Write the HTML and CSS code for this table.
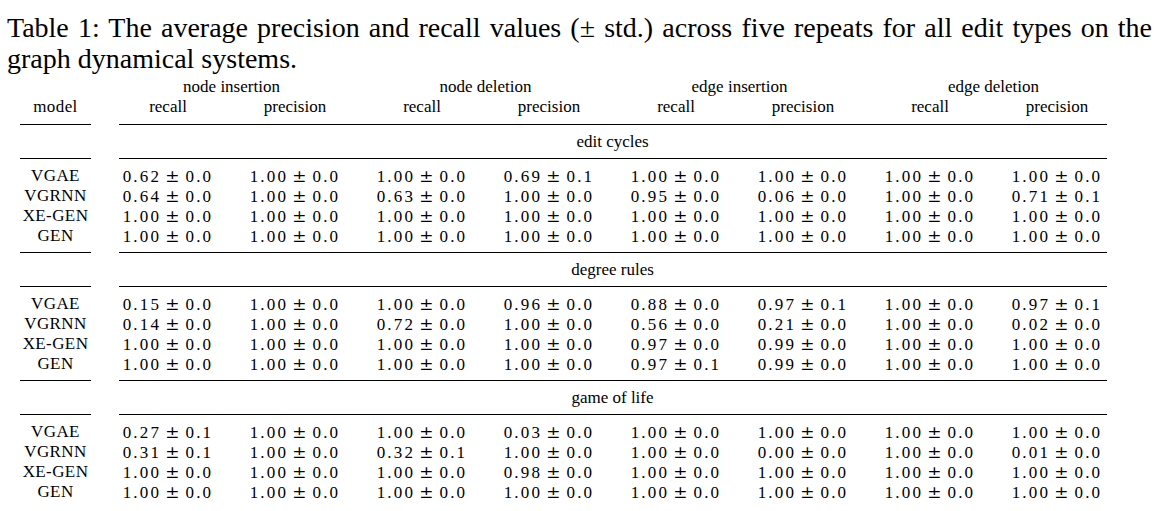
FILE: index.html
```html
<!DOCTYPE html>
<html>
<head>
<meta charset="utf-8">
<link rel="stylesheet" href="styles.css">
</head>
<body>
<p class="caption">Table 1: The average precision and recall values (± std.) across five repeats for all edit types on the graph dynamical systems.</p>
<div class="table">
  <div class="row head">
    <div></div>
    <div class="group">node insertion</div>
    <div class="group">node deletion</div>
    <div class="group">edge insertion</div>
    <div class="group">edge deletion</div>
  </div>
  <div class="row head head2">
    <div class="model">model</div>
    <div class="sub">recall</div><div class="sub">precision</div>
    <div class="sub">recall</div><div class="sub">precision</div>
    <div class="sub">recall</div><div class="sub">precision</div>
    <div class="sub">recall</div><div class="sub">precision</div>
  </div>
  <div class="row rule"><div class="rm"></div><div class="rx"></div></div>

  <div class="row title"><div></div><div class="tt">edit cycles</div></div>
  <div class="row rule"><div class="rm"></div><div class="rx"></div></div>
  <div class="block">
    <div class="row data"><div class="model">VGAE</div><span class="v">0.62<i>±</i>0.0</span><span class="v">1.00<i>±</i>0.0</span><span class="v">1.00<i>±</i>0.0</span><span class="v">0.69<i>±</i>0.1</span><span class="v">1.00<i>±</i>0.0</span><span class="v">1.00<i>±</i>0.0</span><span class="v">1.00<i>±</i>0.0</span><span class="v">1.00<i>±</i>0.0</span></div>
    <div class="row data"><div class="model">VGRNN</div><span class="v">0.64<i>±</i>0.0</span><span class="v">1.00<i>±</i>0.0</span><span class="v">0.63<i>±</i>0.0</span><span class="v">1.00<i>±</i>0.0</span><span class="v">0.95<i>±</i>0.0</span><span class="v">0.06<i>±</i>0.0</span><span class="v">1.00<i>±</i>0.0</span><span class="v">0.71<i>±</i>0.1</span></div>
    <div class="row data"><div class="model">XE-GEN</div><span class="v">1.00<i>±</i>0.0</span><span class="v">1.00<i>±</i>0.0</span><span class="v">1.00<i>±</i>0.0</span><span class="v">1.00<i>±</i>0.0</span><span class="v">1.00<i>±</i>0.0</span><span class="v">1.00<i>±</i>0.0</span><span class="v">1.00<i>±</i>0.0</span><span class="v">1.00<i>±</i>0.0</span></div>
    <div class="row data"><div class="model">GEN</div><span class="v">1.00<i>±</i>0.0</span><span class="v">1.00<i>±</i>0.0</span><span class="v">1.00<i>±</i>0.0</span><span class="v">1.00<i>±</i>0.0</span><span class="v">1.00<i>±</i>0.0</span><span class="v">1.00<i>±</i>0.0</span><span class="v">1.00<i>±</i>0.0</span><span class="v">1.00<i>±</i>0.0</span></div>
  </div>
  <div class="row rule"><div class="rm"></div><div class="rx"></div></div>

  <div class="row title"><div></div><div class="tt">degree rules</div></div>
  <div class="row rule"><div class="rm"></div><div class="rx"></div></div>
  <div class="block">
    <div class="row data"><div class="model">VGAE</div><span class="v">0.15<i>±</i>0.0</span><span class="v">1.00<i>±</i>0.0</span><span class="v">1.00<i>±</i>0.0</span><span class="v">0.96<i>±</i>0.0</span><span class="v">0.88<i>±</i>0.0</span><span class="v">0.97<i>±</i>0.1</span><span class="v">1.00<i>±</i>0.0</span><span class="v">0.97<i>±</i>0.1</span></div>
    <div class="row data"><div class="model">VGRNN</div><span class="v">0.14<i>±</i>0.0</span><span class="v">1.00<i>±</i>0.0</span><span class="v">0.72<i>±</i>0.0</span><span class="v">1.00<i>±</i>0.0</span><span class="v">0.56<i>±</i>0.0</span><span class="v">0.21<i>±</i>0.0</span><span class="v">1.00<i>±</i>0.0</span><span class="v">0.02<i>±</i>0.0</span></div>
    <div class="row data"><div class="model">XE-GEN</div><span class="v">1.00<i>±</i>0.0</span><span class="v">1.00<i>±</i>0.0</span><span class="v">1.00<i>±</i>0.0</span><span class="v">1.00<i>±</i>0.0</span><span class="v">0.97<i>±</i>0.0</span><span class="v">0.99<i>±</i>0.0</span><span class="v">1.00<i>±</i>0.0</span><span class="v">1.00<i>±</i>0.0</span></div>
    <div class="row data"><div class="model">GEN</div><span class="v">1.00<i>±</i>0.0</span><span class="v">1.00<i>±</i>0.0</span><span class="v">1.00<i>±</i>0.0</span><span class="v">1.00<i>±</i>0.0</span><span class="v">0.97<i>±</i>0.1</span><span class="v">0.99<i>±</i>0.0</span><span class="v">1.00<i>±</i>0.0</span><span class="v">1.00<i>±</i>0.0</span></div>
  </div>
  <div class="row rule"><div class="rm"></div><div class="rx"></div></div>

  <div class="row title"><div></div><div class="tt">game of life</div></div>
  <div class="row rule"><div class="rm"></div><div class="rx"></div></div>
  <div class="block">
    <div class="row data"><div class="model">VGAE</div><span class="v">0.27<i>±</i>0.1</span><span class="v">1.00<i>±</i>0.0</span><span class="v">1.00<i>±</i>0.0</span><span class="v">0.03<i>±</i>0.0</span><span class="v">1.00<i>±</i>0.0</span><span class="v">1.00<i>±</i>0.0</span><span class="v">1.00<i>±</i>0.0</span><span class="v">1.00<i>±</i>0.0</span></div>
    <div class="row data"><div class="model">VGRNN</div><span class="v">0.31<i>±</i>0.1</span><span class="v">1.00<i>±</i>0.0</span><span class="v">0.32<i>±</i>0.1</span><span class="v">1.00<i>±</i>0.0</span><span class="v">1.00<i>±</i>0.0</span><span class="v">0.00<i>±</i>0.0</span><span class="v">1.00<i>±</i>0.0</span><span class="v">0.01<i>±</i>0.0</span></div>
    <div class="row data"><div class="model">XE-GEN</div><span class="v">1.00<i>±</i>0.0</span><span class="v">1.00<i>±</i>0.0</span><span class="v">1.00<i>±</i>0.0</span><span class="v">0.98<i>±</i>0.0</span><span class="v">1.00<i>±</i>0.0</span><span class="v">1.00<i>±</i>0.0</span><span class="v">1.00<i>±</i>0.0</span><span class="v">1.00<i>±</i>0.0</span></div>
    <div class="row data"><div class="model">GEN</div><span class="v">1.00<i>±</i>0.0</span><span class="v">1.00<i>±</i>0.0</span><span class="v">1.00<i>±</i>0.0</span><span class="v">1.00<i>±</i>0.0</span><span class="v">1.00<i>±</i>0.0</span><span class="v">1.00<i>±</i>0.0</span><span class="v">1.00<i>±</i>0.0</span><span class="v">1.00<i>±</i>0.0</span></div>
  </div>
</div>
</body>
</html>
```
FILE: styles.css
```css
html, body {
  margin: 0;
  background: #fff;
  color: #000;
  font-family: "Liberation Serif", "Times New Roman", serif;
}
.caption {
  margin: 0;
  padding: 12px 0 0 7px;
  width: 1145px;
  font-size: 28px;
  line-height: 31px;
  text-align: justify;
}
.table {
  padding-left: 20px;
  margin-top: 3px;
}
.row {
  display: grid;
  grid-template-columns: 84.5px repeat(8, 127px);
}
.head {
  font-size: 17px;
  line-height: 20px;
}
.group {
  grid-column: span 2;
  text-align: center;
}
.head2 {
  padding-bottom: 7px;
}
.sub {
  text-align: center;
}
.model {
  width: 71px;
  text-align: center;
  font-size: 17px;
  letter-spacing: 0.4px;
  white-space: nowrap;
}
.rule {
  height: 1px;
}
.rm {
  width: 71px;
  background: #000;
}
.rx {
  grid-column: 2 / -1;
  margin: 0 13.5px 0 14.5px;
  background: #000;
}
.title {
  height: 33px;
  line-height: 33px;
  font-size: 17px;
}
.tt {
  grid-column: 2 / -1;
  text-align: center;
}
.block {
  padding: 7px 0 6px;
}
.data {
  height: 20px;
  line-height: 20px;
}
.v {
  text-align: center;
  font-size: 17px;
  letter-spacing: 2.2px;
  white-space: nowrap;
}
.v i {
  font-style: normal;
  font-family: "DejaVu Serif", serif;
  font-size: 17px;
  letter-spacing: 0;
  margin: 0 6px 0 4px;
}
```
